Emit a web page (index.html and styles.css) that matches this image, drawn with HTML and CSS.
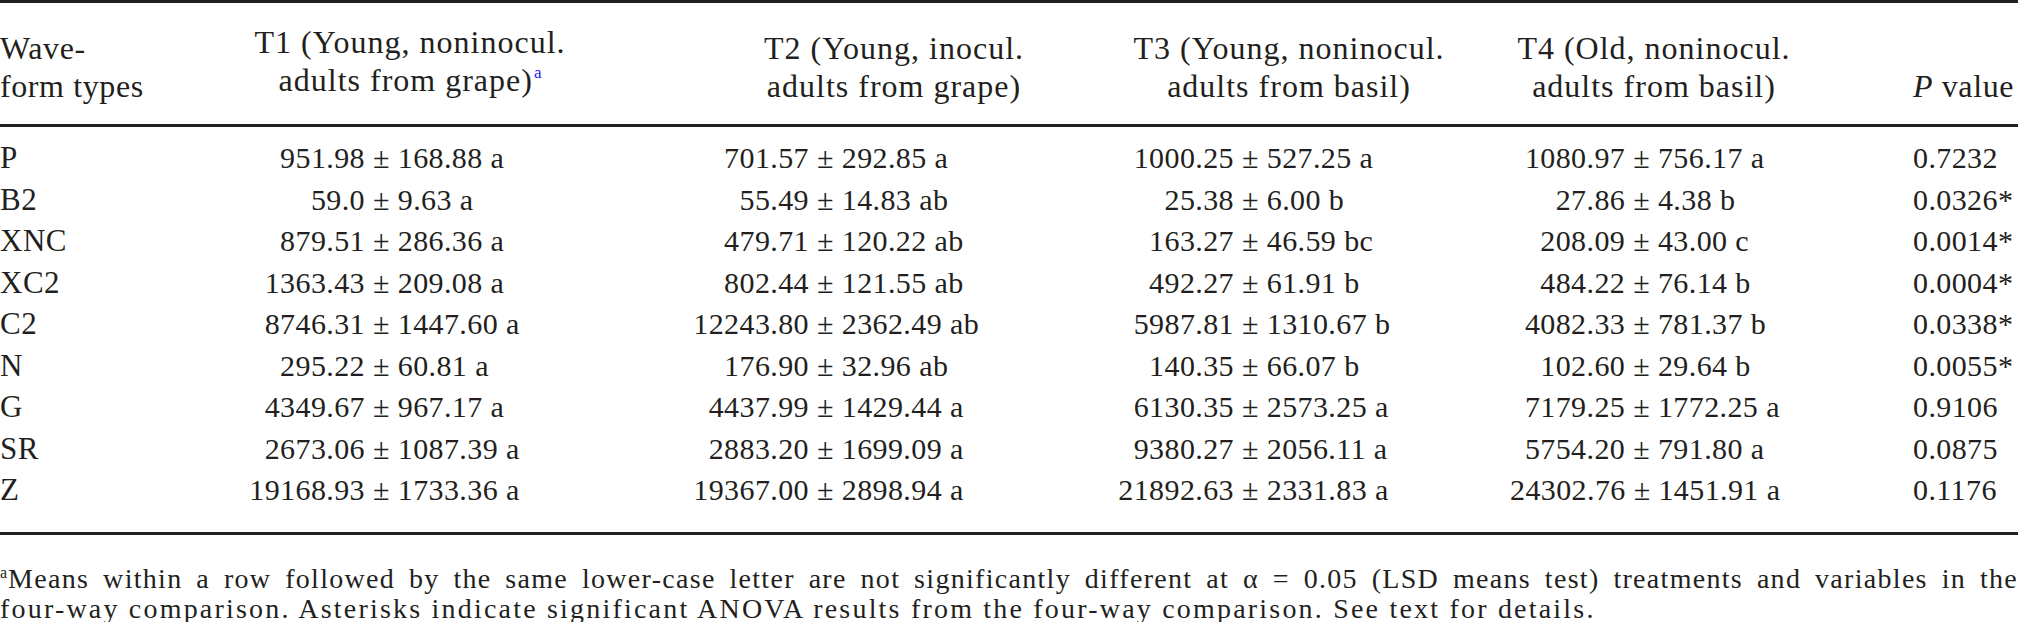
FILE: index.html
```html
<!DOCTYPE html>
<html lang="en">
<head>
<meta charset="utf-8">
<title>Waveform table</title>
<link rel="stylesheet" href="styles.css">
</head>
<body>
<div class="page">
  <div class="table">
    <div class="thead">
      <div class="h lab">Wave-<br>form types</div>
      <div class="h col c1">T1 (Young, noninocul.<br>adults from grape)<sup class="fn-link">a</sup></div>
      <div class="h col c2">T2 (Young, inocul.<br>adults from grape)</div>
      <div class="h col c3">T3 (Young, noninocul.<br>adults from basil)</div>
      <div class="h col c4">T4 (Old, noninocul.<br>adults from basil)</div>
      <div class="h pv"><i>P</i> value</div>
    </div>
    <div class="tbody">
      <div class="lab">P</div>
      <div class="val c1"><span class="l">951.98</span><span class="r">± 168.88 a</span></div>
      <div class="val c2"><span class="l">701.57</span><span class="r">± 292.85 a</span></div>
      <div class="val c3"><span class="l">1000.25</span><span class="r">± 527.25 a</span></div>
      <div class="val c4"><span class="l">1080.97</span><span class="r">± 756.17 a</span></div>
      <div class="pv">0.7232</div>

      <div class="lab">B2</div>
      <div class="val c1"><span class="l">59.0</span><span class="r">± 9.63 a</span></div>
      <div class="val c2"><span class="l">55.49</span><span class="r">± 14.83 ab</span></div>
      <div class="val c3"><span class="l">25.38</span><span class="r">± 6.00 b</span></div>
      <div class="val c4"><span class="l">27.86</span><span class="r">± 4.38 b</span></div>
      <div class="pv">0.0326*</div>

      <div class="lab">XNC</div>
      <div class="val c1"><span class="l">879.51</span><span class="r">± 286.36 a</span></div>
      <div class="val c2"><span class="l">479.71</span><span class="r">± 120.22 ab</span></div>
      <div class="val c3"><span class="l">163.27</span><span class="r">± 46.59 bc</span></div>
      <div class="val c4"><span class="l">208.09</span><span class="r">± 43.00 c</span></div>
      <div class="pv">0.0014*</div>

      <div class="lab">XC2</div>
      <div class="val c1"><span class="l">1363.43</span><span class="r">± 209.08 a</span></div>
      <div class="val c2"><span class="l">802.44</span><span class="r">± 121.55 ab</span></div>
      <div class="val c3"><span class="l">492.27</span><span class="r">± 61.91 b</span></div>
      <div class="val c4"><span class="l">484.22</span><span class="r">± 76.14 b</span></div>
      <div class="pv">0.0004*</div>

      <div class="lab">C2</div>
      <div class="val c1"><span class="l">8746.31</span><span class="r">± 1447.60 a</span></div>
      <div class="val c2"><span class="l">12243.80</span><span class="r">± 2362.49 ab</span></div>
      <div class="val c3"><span class="l">5987.81</span><span class="r">± 1310.67 b</span></div>
      <div class="val c4"><span class="l">4082.33</span><span class="r">± 781.37 b</span></div>
      <div class="pv">0.0338*</div>

      <div class="lab">N</div>
      <div class="val c1"><span class="l">295.22</span><span class="r">± 60.81 a</span></div>
      <div class="val c2"><span class="l">176.90</span><span class="r">± 32.96 ab</span></div>
      <div class="val c3"><span class="l">140.35</span><span class="r">± 66.07 b</span></div>
      <div class="val c4"><span class="l">102.60</span><span class="r">± 29.64 b</span></div>
      <div class="pv">0.0055*</div>

      <div class="lab">G</div>
      <div class="val c1"><span class="l">4349.67</span><span class="r">± 967.17 a</span></div>
      <div class="val c2"><span class="l">4437.99</span><span class="r">± 1429.44 a</span></div>
      <div class="val c3"><span class="l">6130.35</span><span class="r">± 2573.25 a</span></div>
      <div class="val c4"><span class="l">7179.25</span><span class="r">± 1772.25 a</span></div>
      <div class="pv">0.9106</div>

      <div class="lab">SR</div>
      <div class="val c1"><span class="l">2673.06</span><span class="r">± 1087.39 a</span></div>
      <div class="val c2"><span class="l">2883.20</span><span class="r">± 1699.09 a</span></div>
      <div class="val c3"><span class="l">9380.27</span><span class="r">± 2056.11 a</span></div>
      <div class="val c4"><span class="l">5754.20</span><span class="r">± 791.80 a</span></div>
      <div class="pv">0.0875</div>

      <div class="lab">Z</div>
      <div class="val c1"><span class="l">19168.93</span><span class="r">± 1733.36 a</span></div>
      <div class="val c2"><span class="l">19367.00</span><span class="r">± 2898.94 a</span></div>
      <div class="val c3"><span class="l">21892.63</span><span class="r">± 2331.83 a</span></div>
      <div class="val c4"><span class="l">24302.76</span><span class="r">± 1451.91 a</span></div>
      <div class="pv">0.1176</div>
    </div>
  </div>
  <p class="footnote"><span class="line1"><sup>a</sup>Means within a row followed by the same lower-case letter are not significantly different at α = 0.05 (LSD means test) treatments and variables in the</span><span class="line2">four-way comparison. Asterisks indicate significant ANOVA results from the four-way comparison. See text for details.</span></p>
</div>
</body>
</html>
```

FILE: styles.css
```css
html, body {
  margin: 0;
  padding: 0;
  background: #ffffff;
}

.page {
  width: 2018px;
  color: #231f20;
  font-family: "Liberation Serif", "Times New Roman", serif;
}

.thead,
.tbody {
  display: grid;
  grid-template-columns: 182px 456px 456px 390px 340px 1fr;
}

.thead {
  border-top: 3px solid #231f20;
  border-bottom: 3px solid #231f20;
  padding: 20px 0 19px;
  font-size: 32px;
  letter-spacing: 1px;
  line-height: 38px;
  align-items: end;
}

.h.lab {
  letter-spacing: 0.6px;
}

.h.col {
  text-align: center;
}

.h.c2 {
  padding-left: 56px;
}

.pv {
  padding-left: 89px;
  white-space: nowrap;
}

.thead .pv {
  letter-spacing: 0.6px;
}

.fn-link {
  color: #1a1aff;
  font-size: 17px;
  letter-spacing: 0;
  vertical-align: 0;
  position: relative;
  top: -13px;
  margin-left: 1px;
}

.tbody {
  grid-auto-rows: 41.5px;
  line-height: 41.5px;
  padding: 10px 0 21px;
  border-bottom: 3px solid #231f20;
  font-size: 30px;
  letter-spacing: 0.4px;
}

.tbody .lab {
  font-size: 31px;
  letter-spacing: 0.5px;
}

.lab {
  white-space: nowrap;
}

.val {
  display: flex;
  justify-content: center;
  white-space: nowrap;
}

.val.c2 {
  padding-right: 24px;
}

.val.c3 {
  padding-right: 20px;
}

.val.c4 {
  padding-left: 26px;
}

.val .l {
  width: 125px;
  text-align: right;
}

.val .r {
  width: 215px;
  padding-left: 8px;
  box-sizing: border-box;
  text-align: left;
}

.footnote {
  margin: 31px 0 0;
  font-size: 28px;
  line-height: 26px;
  text-align: left;
}

.footnote .line1 {
  display: block;
  letter-spacing: 1.3px;
  text-align: justify;
  text-align-last: justify;
}

.footnote .line2 {
  display: block;
  letter-spacing: 2.2px;
  white-space: nowrap;
}

.footnote sup {
  font-size: 16px;
  letter-spacing: 0;
  vertical-align: 0;
  position: relative;
  top: -10px;
  margin-right: 1px;
}
```
